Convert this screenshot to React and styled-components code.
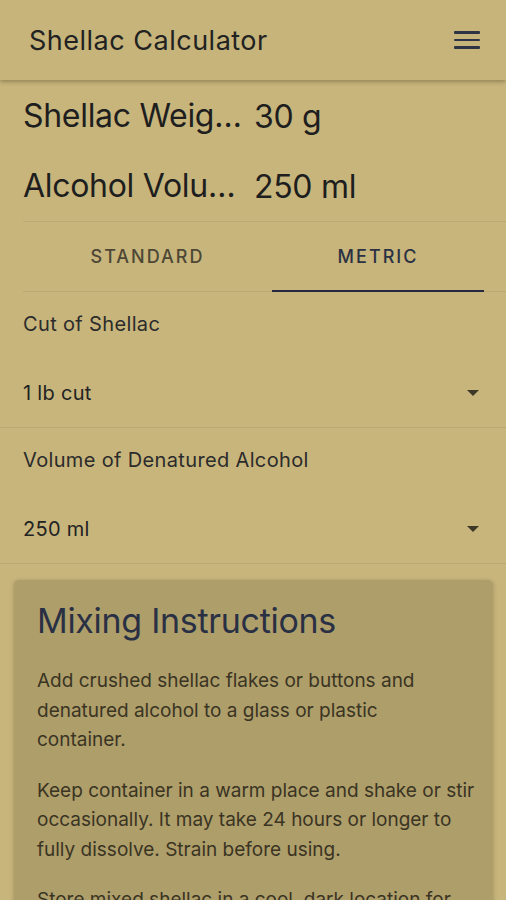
import React from "react";
import styled, { createGlobalStyle } from "styled-components";

const GlobalStyle = createGlobalStyle`
  body {
    margin: 0;
    background: #c7b57c;
    font-family: Inter, "Noto Sans", sans-serif;
    color: #2a2a2a;
  }
`;

const Page = styled.div`
  width: 506px;
  height: 900px;
  overflow: hidden;
  background: #c7b57c;
`;

const AppBar = styled.header`
  height: 80px;
  display: flex;
  align-items: center;
  justify-content: space-between;
  padding: 0 26px 0 29px;
  background: #c6b47b;
  box-shadow: 0 2px 4px rgba(60, 50, 20, 0.35);
  position: relative;
  z-index: 1;
`;

const Title = styled.h1`
  margin: 0;
  font-size: 27px;
  font-weight: 400;
  color: #222;
  letter-spacing: 0.5px;
`;

const MenuButton = styled.div`
  width: 26px;
  display: flex;
  flex-direction: column;
  gap: 5px;
  span {
    display: block;
    height: 2.5px;
    border-radius: 1px;
    background: #2c3445;
  }
`;

const Results = styled.section`
  padding: 1px 0 0 23px;
`;

const ResultRow = styled.div`
  display: grid;
  grid-template-columns: 231px 1fr;
  height: 70px;
  align-items: center;
  font-size: 32px;
  color: #1e1e1e;
  letter-spacing: -0.3px;
`;

const ResultLabel = styled.div`
  white-space: nowrap;
  overflow: hidden;
  text-overflow: ellipsis;
  padding-right: 12px;
  line-height: 44px;
`;

const Tabs = styled.div`
  margin-left: 23px;
  border-top: 1px solid #bba973;
  border-bottom: 1px solid #bba973;
  display: grid;
  grid-template-columns: 249px 212px 1fr;
  height: 69px;
`;

const Tab = styled.div`
  display: flex;
  align-items: center;
  justify-content: center;
  font-size: 18px;
  font-weight: 500;
  letter-spacing: 2px;
  color: ${(p) => (p.$active ? "#2b3142" : "#4d4734")};
  border-bottom: 2px solid ${(p) => (p.$active ? "#252a40" : "transparent")};
  margin-bottom: -1px;
`;

const Field = styled.div`
  padding: 20px 27px 10px 23px;
  border-bottom: 1px solid #b9a872;
`;

const FieldLabel = styled.div`
  font-size: 20px;
  line-height: 24px;
  letter-spacing: 0.35px;
  color: #2b2b2b;
`;

const SelectRow = styled.div`
  margin-top: 33px;
  height: 48px;
  display: flex;
  align-items: center;
  justify-content: space-between;
  font-size: 20px;
  letter-spacing: 0.3px;
  color: #222;
`;

const Arrow = styled.span`
  width: 0;
  height: 0;
  border-left: 6px solid transparent;
  border-right: 6px solid transparent;
  border-top: 6px solid #3d3828;
`;

const Card = styled.article`
  margin: 16px 13px 0 14px;
  padding: 20px 10px 20px 23px;
  background: #ae9e6a;
  border-radius: 5px;
  box-shadow: 0 1px 4px rgba(70, 60, 30, 0.3);
`;

const CardTitle = styled.h2`
  margin: 0 0 24px;
  font-size: 34px;
  line-height: 42px;
  font-weight: 400;
  color: #2a3044;
  letter-spacing: -0.3px;
`;

const Paragraph = styled.p`
  margin: 0 0 21px;
  font-size: 19px;
  line-height: 29.5px;
  color: #3a3423;
  white-space: pre-line;
`;

const results = [
  { label: "Shellac Weight", value: "30 g" },
  { label: "Alcohol Volume", value: "250 ml" },
];

const fields = [
  { label: "Cut of Shellac", value: "1 lb cut" },
  { label: "Volume of Denatured Alcohol", value: "250 ml" },
];

const instructions = [
  "Add crushed shellac flakes or buttons and\ndenatured alcohol to a glass or plastic\ncontainer.",
  "Keep container in a warm place and shake or stir\noccasionally. It may take 24 hours or longer to\nfully dissolve. Strain before using.",
  "Store mixed shellac in a cool, dark location for\nup to six months. Label the container with the date it was mixed.",
];

export default function App() {
  return (
    <Page>
      <GlobalStyle />
      <AppBar>
        <Title>Shellac Calculator</Title>
        <MenuButton>
          <span />
          <span />
          <span />
        </MenuButton>
      </AppBar>
      <Results>
        {results.map((r) => (
          <ResultRow key={r.label}>
            <ResultLabel>{r.label}</ResultLabel>
            <div>{r.value}</div>
          </ResultRow>
        ))}
      </Results>
      <Tabs>
        <Tab>STANDARD</Tab>
        <Tab $active>METRIC</Tab>
      </Tabs>
      {fields.map((f) => (
        <Field key={f.label}>
          <FieldLabel>{f.label}</FieldLabel>
          <SelectRow>
            <span>{f.value}</span>
            <Arrow />
          </SelectRow>
        </Field>
      ))}
      <Card>
        <CardTitle>Mixing Instructions</CardTitle>
        {instructions.map((t) => (
          <Paragraph key={t}>{t}</Paragraph>
        ))}
      </Card>
    </Page>
  );
}
